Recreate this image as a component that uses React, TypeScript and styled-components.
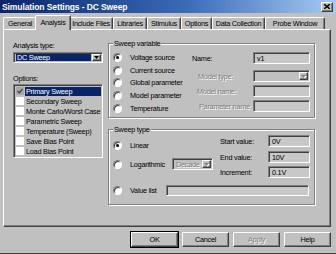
import React from 'react';
import styled, { createGlobalStyle, css } from 'styled-components';

const FACE = '#c0c0c0';
const NAVY = '#0a246a';

const Global = createGlobalStyle`
  html, body { margin: 0; padding: 0; background: ${FACE}; }
  body {
    font-family: "Liberation Sans", Arial, sans-serif;
    font-size: 7.3px;
    letter-spacing: -0.25px;
    color: #000;
  }
  * { box-sizing: border-box; }
`;

const raised = css`
  border-top: 1px solid #fff;
  border-left: 1px solid #fff;
  border-right: 1px solid #404040;
  border-bottom: 1px solid #404040;
  box-shadow: inset -1px -1px 0 #808080;
`;

const sunken = css`
  border-top: 1px solid #808080;
  border-left: 1px solid #808080;
  border-right: 1px solid #fff;
  border-bottom: 1px solid #fff;
  box-shadow: inset 1px 1px 0 #404040;
`;

const Window = styled.div`
  width: 336px;
  height: 254px;
  background: ${FACE};
  display: flex;
  flex-direction: column;
  border-bottom: 1px solid #404040;
  overflow: hidden;
`;

const TitleBar = styled.div`
  height: 13px;
  flex: none;
  background: linear-gradient(to right, ${NAVY} 0%, #3a6ab8 55%, #a6caf0 100%);
  display: flex;
  align-items: center;
  justify-content: space-between;
  padding: 0 3px 0 2px;
`;

const TitleText = styled.span`
  color: #fff;
  font-weight: bold;
  font-size: 8.5px;
  letter-spacing: -0.1px;
`;

const CloseBtn = styled.div`
  width: 12px;
  height: 10px;
  background: ${FACE};
  ${raised};
  display: flex;
  align-items: center;
  justify-content: center;
`;

const TabRow = styled.div`
  height: 14px;
  margin-top: 2px;
  padding-left: 3px;
  display: flex;
  align-items: flex-end;
  flex: none;
  position: relative;
  z-index: 1;
`;

const Tab = styled.div<{ $w: number; $active?: boolean }>`
  width: ${(p) => p.$w}px;
  height: ${(p) => (p.$active ? 15 : 12)}px;
  margin: ${(p) => (p.$active ? '0 -2px -1px -2px' : '0')};
  background: ${FACE};
  border-top: 1px solid #fff;
  border-left: 1px solid #fff;
  border-right: 1px solid #404040;
  box-shadow: inset -1px 0 0 #808080;
  border-radius: 2px 2px 0 0;
  display: flex;
  align-items: ${(p) => (p.$active ? 'flex-start' : 'center')};
  padding-top: ${(p) => (p.$active ? 2 : 0)}px;
  justify-content: center;
  white-space: nowrap;
  position: relative;
  z-index: ${(p) => (p.$active ? 2 : 0)};
`;

const Panel = styled.div`
  height: 198px;
  margin: 0 5px 0 3px;
  flex: none;
  background: ${FACE};
  ${raised};
  display: flex;
  align-items: flex-start;
`;

const LeftCol = styled.div`
  width: 90px;
  margin-left: 9px;
  padding-top: 11px;
  display: flex;
  flex-direction: column;
`;

const RightCol = styled.div`
  width: 207px;
  margin-left: 5px;
  padding-top: 13px;
  display: flex;
  flex-direction: column;
`;

const Label = styled.div<{ $mt?: number; $disabled?: boolean; $indent?: number }>`
  height: 9px;
  line-height: 9px;
  margin-top: ${(p) => p.$mt ?? 0}px;
  padding-left: ${(p) => p.$indent ?? 0}px;
  white-space: nowrap;
  color: ${(p) => (p.$disabled ? '#808080' : '#000')};
  text-shadow: ${(p) => (p.$disabled ? '1px 1px 0 #fff' : 'none')};
`;

const Combo = styled.div<{ $w: number; $h?: number; $mt?: number }>`
  width: ${(p) => p.$w}px;
  height: ${(p) => p.$h ?? 11}px;
  margin-top: ${(p) => p.$mt ?? 0}px;
  flex: none;
  ${sunken};
  background: ${FACE};
  display: flex;
  align-items: stretch;
  padding: 1px 1px 1px 2px;
`;

const ComboText = styled.div<{ $sel?: boolean; $disabled?: boolean }>`
  flex: 1;
  display: flex;
  align-items: center;
  padding-left: 1px;
  margin-right: 1px;
  white-space: nowrap;
  overflow: hidden;
  background: ${(p) => (p.$sel ? NAVY : 'transparent')};
  color: ${(p) => (p.$sel ? '#fff' : p.$disabled ? '#808080' : '#000')};
  text-shadow: ${(p) => (p.$disabled ? '1px 1px 0 #fff' : 'none')};
`;

const ArrowBtn = styled.div`
  width: 9px;
  flex: none;
  background: ${FACE};
  ${raised};
  display: flex;
  align-items: center;
  justify-content: center;
`;

const ListBox = styled.div`
  width: 90px;
  height: 74px;
  margin-top: 1px;
  ${sunken};
  background: ${FACE};
  padding: 1px 1px 0 2px;
  display: flex;
  flex-direction: column;
`;

const ListItem = styled.div`
  height: 10px;
  display: flex;
  align-items: center;
`;

const CheckBox = styled.div<{ $checked?: boolean }>`
  width: 8px;
  height: 8px;
  flex: none;
  background: ${(p) => (p.$checked ? '#a8a8a8' : '#fff')};
  display: flex;
  align-items: center;
  justify-content: center;
`;

const ItemText = styled.div<{ $sel?: boolean }>`
  flex: 1;
  height: 9px;
  line-height: 9px;
  padding-left: 1px;
  margin-left: 1px;
  white-space: nowrap;
  background: ${(p) => (p.$sel ? NAVY : 'transparent')};
  color: ${(p) => (p.$sel ? '#fff' : '#000')};
`;

const Group = styled.div<{ $h: number; $mt?: number }>`
  position: relative;
  height: ${(p) => p.$h}px;
  margin-top: ${(p) => p.$mt ?? 0}px;
  border: 1px solid #808080;
  box-shadow: 1px 1px 0 #fff, inset 1px 1px 0 #fff;
`;

const Legend = styled.div`
  position: absolute;
  top: -5px;
  left: 4px;
  padding: 0 1px;
  line-height: 9px;
  background: ${FACE};
  white-space: nowrap;
`;

const VarBody = styled.div`
  display: flex;
  padding: 7px 0 0 4px;
`;

const RadioList = styled.div`
  width: 79px;
  display: flex;
  flex-direction: column;
`;

const RadioRow = styled.div<{ $h?: number; $mt?: number }>`
  height: ${(p) => p.$h ?? 12.7}px;
  margin-top: ${(p) => p.$mt ?? 0}px;
  display: flex;
  align-items: center;
  white-space: nowrap;
`;

const Radio = styled.div<{ $checked?: boolean }>`
  width: 9px;
  height: 9px;
  flex: none;
  border-radius: 50%;
  border-style: solid;
  border-width: 1px;
  border-color: #808080 #fff #fff #808080;
  box-shadow: inset 1px 1px 0 #404040;
  background: #fff;
  display: flex;
  align-items: center;
  justify-content: center;
  &::after {
    content: '';
    width: 3px;
    height: 3px;
    border-radius: 50%;
    background: ${(p) => (p.$checked ? '#000' : 'transparent')};
  }
`;

const RadioLabel = styled.span<{ $w?: number }>`
  margin-left: 8px;
  width: ${(p) => (p.$w ? `${p.$w}px` : 'auto')};
  flex: none;
`;

const Fields = styled.div<{ $w: number }>`
  width: ${(p) => p.$w}px;
  display: flex;
  flex-direction: column;
`;

const FieldRow = styled.div<{ $mt?: number; $labelW: number }>`
  display: grid;
  grid-template-columns: ${(p) => p.$labelW}px 1fr;
  align-items: center;
  margin-top: ${(p) => p.$mt ?? 0}px;
  height: 12px;
`;

const TextBox = styled.div<{ $w?: number; $h?: number }>`
  width: ${(p) => (p.$w ? `${p.$w}px` : '100%')};
  height: ${(p) => p.$h ?? 12}px;
  flex: none;
  ${sunken};
  background: #c8c8c8;
  display: flex;
  align-items: center;
  padding-left: 3px;
  white-space: nowrap;
`;

const TypeBody = styled.div`
  display: flex;
  flex-direction: column;
  padding: 5px 0 0 4px;
`;

const TypeTop = styled.div`
  display: flex;
`;

const TypeLeft = styled.div`
  width: 107px;
  padding-top: 4px;
  display: flex;
  flex-direction: column;
`;

const ButtonRow = styled.div`
  display: flex;
  justify-content: flex-end;
  gap: 4px;
  padding: 5px 5px 0 0;
`;

const Button = styled.div<{ $default?: boolean; $disabled?: boolean }>`
  width: 47px;
  height: 15px;
  background: ${FACE};
  display: flex;
  align-items: center;
  justify-content: center;
  ${raised};
  ${(p) =>
    p.$default &&
    css`
      outline: 1px solid #000;
      outline-offset: 0;
    `}
  color: ${(p) => (p.$disabled ? '#808080' : '#000')};
  text-shadow: ${(p) => (p.$disabled ? '1px 1px 0 #fff' : 'none')};
`;

const DownArrow = ({ disabled }: { disabled?: boolean }) => (
  <svg width="5" height="3" viewBox="0 0 5 3" style={{ overflow: 'visible' }}>
    {disabled && <path d="M1 1h5L3.5 3.5z" fill="#fff" />}
    <path d="M0 0h5L2.5 3z" fill={disabled ? '#808080' : '#000'} />
  </svg>
);

const tabs: [string, number][] = [
  ['General', 34],
  ['Analysis', 36],
  ['Include Files', 44],
  ['Libraries', 34],
  ['Stimulus', 34],
  ['Options', 31],
  ['Data Collection', 53],
  ['Probe Window', 60],
];

const options = [
  'Primary Sweep',
  'Secondary Sweep',
  'Monte Carlo/Worst Case',
  'Parametric Sweep',
  'Temperature (Sweep)',
  'Save Bias Point',
  'Load Bias Point',
];

export default function App() {
  return (
    <>
      <Global />
      <Window>
        <TitleBar>
          <TitleText>Simulation Settings - DC Sweep</TitleText>
          <CloseBtn>
            <svg width="6" height="5" viewBox="0 0 6 5">
              <path d="M0 0L6 5M6 0L0 5" stroke="#000" strokeWidth="1.4" />
            </svg>
          </CloseBtn>
        </TitleBar>
        <TabRow>
          {tabs.map(([t, w]) => (
            <Tab key={t} $w={w} $active={t === 'Analysis'}>
              {t}
            </Tab>
          ))}
        </TabRow>
        <Panel>
          <LeftCol>
            <Label>Analysis type:</Label>
            <Combo $w={90} $mt={2}>
              <ComboText $sel>DC Sweep</ComboText>
              <ArrowBtn>
                <DownArrow />
              </ArrowBtn>
            </Combo>
            <Label $mt={11}>Options:</Label>
            <ListBox>
              {options.map((o, i) => (
                <ListItem key={o}>
                  <CheckBox $checked={i === 0}>
                    {i === 0 && (
                      <svg width="6" height="6" viewBox="0 0 6 6">
                        <path d="M0.5 3L2.3 4.8L5.5 1" stroke="#404040" strokeWidth="1.3" fill="none" />
                      </svg>
                    )}
                  </CheckBox>
                  <ItemText $sel={i === 0}>{o}</ItemText>
                </ListItem>
              ))}
            </ListBox>
          </LeftCol>
          <RightCol>
            <Group $h={75}>
              <Legend>Sweep variable</Legend>
              <VarBody>
                <RadioList>
                  <RadioRow>
                    <Radio $checked />
                    <RadioLabel>Voltage source</RadioLabel>
                  </RadioRow>
                  <RadioRow>
                    <Radio />
                    <RadioLabel>Current source</RadioLabel>
                  </RadioRow>
                  <RadioRow>
                    <Radio />
                    <RadioLabel>Global parameter</RadioLabel>
                  </RadioRow>
                  <RadioRow>
                    <Radio />
                    <RadioLabel>Model parameter</RadioLabel>
                  </RadioRow>
                  <RadioRow>
                    <Radio />
                    <RadioLabel>Temperature</RadioLabel>
                  </RadioRow>
                </RadioList>
                <Fields $w={118}>
                  <FieldRow $labelW={61} $mt={1}>
                    <Label>Name:</Label>
                    <TextBox>v1</TextBox>
                  </FieldRow>
                  <FieldRow $labelW={61} $mt={6}>
                    <Label $disabled $indent={6}>Model type:</Label>
                    <Combo $w={57} $h={12}>
                      <ComboText $disabled />
                      <ArrowBtn>
                        <DownArrow disabled />
                      </ArrowBtn>
                    </Combo>
                  </FieldRow>
                  <FieldRow $labelW={61} $mt={3}>
                    <Label $disabled $indent={5}>Model name:</Label>
                    <TextBox />
                  </FieldRow>
                  <FieldRow $labelW={61} $mt={3}>
                    <Label $disabled $indent={7}>Parameter name:</Label>
                    <TextBox />
                  </FieldRow>
                </Fields>
              </VarBody>
            </Group>
            <Group $h={76} $mt={11}>
              <Legend>Sweep type</Legend>
              <TypeBody>
                <TypeTop>
                  <TypeLeft>
                    <RadioRow $h={12}>
                      <Radio $checked />
                      <RadioLabel>Linear</RadioLabel>
                    </RadioRow>
                    <RadioRow $h={12} $mt={7}>
                      <Radio />
                      <RadioLabel $w={42}>Logarithmic</RadioLabel>
                      <Combo $w={41} $h={12}>
                        <ComboText $disabled>Decade</ComboText>
                        <ArrowBtn>
                          <DownArrow disabled />
                        </ArrowBtn>
                      </Combo>
                    </RadioRow>
                  </TypeLeft>
                  <Fields $w={90}>
                    <FieldRow $labelW={48}>
                      <Label>Start value:</Label>
                      <TextBox>0V</TextBox>
                    </FieldRow>
                    <FieldRow $labelW={48} $mt={4}>
                      <Label>End value:</Label>
                      <TextBox>10V</TextBox>
                    </FieldRow>
                    <FieldRow $labelW={48} $mt={3}>
                      <Label>Increment:</Label>
                      <TextBox>0.1V</TextBox>
                    </FieldRow>
                  </Fields>
                </TypeTop>
                <RadioRow $h={11} $mt={7}>
                  <Radio />
                  <RadioLabel $w={36}>Value list</RadioLabel>
                  <TextBox $w={143} $h={11} />
                </RadioRow>
              </TypeBody>
            </Group>
          </RightCol>
        </Panel>
        <ButtonRow>
          <Button $default>OK</Button>
          <Button>Cancel</Button>
          <Button $disabled>Apply</Button>
          <Button>Help</Button>
        </ButtonRow>
      </Window>
    </>
  );
}
